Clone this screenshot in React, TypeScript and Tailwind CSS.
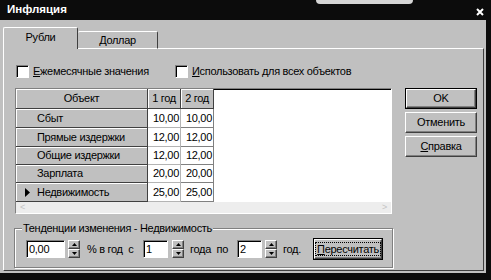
import { FC, ReactNode } from 'react'

const raised =
  'border border-t-white border-l-white border-r-[#404040] border-b-[#404040] shadow-[inset_-1px_-1px_0_#808080]'
const sunken =
  'border border-t-[#808080] border-l-[#808080] border-r-white border-b-white shadow-[inset_1px_1px_0_#000]'

type Row = { name: string; a: string; b: string; h: string; current?: boolean }

const rows: Row[] = [
  { name: 'Сбыт', a: '10,00', b: '10,00', h: 'h-[19px]' },
  { name: 'Прямые издержки', a: '12,00', b: '12,00', h: 'h-[19px]' },
  { name: 'Общие издержки', a: '12,00', b: '12,00', h: 'h-[18px]' },
  { name: 'Зарплата', a: '20,00', b: '20,00', h: 'h-[18px]' },
  { name: 'Недвижимость', a: '25,00', b: '25,00', h: 'h-[19px]', current: true },
]

const Check: FC<{ children: ReactNode }> = ({ children }) => (
  <label className="flex items-center gap-[4px]">
    <span className={`h-[13px] w-[13px] bg-white ${sunken}`} />
    <span>{children}</span>
  </label>
)

const Spin: FC<{ className?: string }> = ({ className = '' }) => (
  <div className={`flex h-[18px] w-[12px] flex-col ${className}`}>
    <div className={`flex h-[9px] items-center justify-center bg-[#c0c0c0] ${raised}`}>
      <svg width="5" height="3" viewBox="0 0 5 3">
        <path d="M2.5 0L5 3H0z" fill="#000" />
      </svg>
    </div>
    <div className={`flex h-[9px] items-center justify-center bg-[#c0c0c0] ${raised}`}>
      <svg width="5" height="3" viewBox="0 0 5 3">
        <path d="M0 0H5L2.5 3z" fill="#000" />
      </svg>
    </div>
  </div>
)

const Field: FC<{ value: string; w: string }> = ({ value, w }) => (
  <div className={`flex h-[18px] items-center bg-white pl-[2px] ${w} ${sunken}`}>{value}</div>
)

const Button: FC<{ children: ReactNode; primary?: boolean }> = ({ children, primary }) =>
  primary ? (
    <div className="h-[21px] w-[72px] border border-black">
      <div className={`flex h-full items-center justify-center bg-[#c0c0c0] ${raised}`}>{children}</div>
    </div>
  ) : (
    <div className={`flex h-[21px] w-[72px] items-center justify-center bg-[#c0c0c0] ${raised}`}>
      {children}
    </div>
  )

export default function App() {
  return (
    <div className="relative h-[280px] w-[491px] overflow-hidden bg-[#0c0c0c] font-['Liberation_Sans',Arial,sans-serif] text-[11px] tracking-[-0.3px] text-black">
      <div className="absolute left-[316px] top-0 h-[4px] w-[97px] rounded-b-[6px] bg-[#d6d6d6]" />

      <div className="flex h-[20px] items-center justify-between pl-[7px] pr-[7px] text-white">
        <span className="text-[11.5px] font-bold tracking-normal">Инфляция</span>
        <svg width="8" height="8" viewBox="0 0 8 8" className="mt-[3px]">
          <path d="M1 1L7 7M7 1L1 7" stroke="#fff" strokeWidth="2" />
        </svg>
      </div>

      <div className="flex h-[253px] w-[486px] flex-col bg-[#c0c0c0] pl-[3px] pr-[2px] pt-[7px] pb-[2px]">
        <div className="relative z-10 -mb-px flex items-end">
          <div className="flex h-[22px] w-[75px] items-center justify-center rounded-t-[2px] border-l border-t border-r border-l-white border-t-white border-r-[#404040] bg-[#c0c0c0] pb-[2px]">
            Рубли
          </div>
          <div className="flex h-[18px] w-[80px] items-center justify-center rounded-t-[2px] border-t border-r border-b border-t-white border-r-[#404040] border-b-white bg-[#c0c0c0]">
            Доллар
          </div>
        </div>

        <div className="flex flex-1 border border-t-white border-l-white border-r-[#404040] border-b-[#404040] pl-[11px] pt-[16px]">
          <div className="flex w-[378px] flex-col">
            <div className="flex h-[13px] items-center pl-[1px]">
              <div className="w-[159px]">
                <Check>
                  <span className="underline">Е</span>жемесячные значения
                </Check>
              </div>
              <Check>
                <span className="underline">И</span>спользовать для всех объектов
              </Check>
            </div>

            <div className={`mt-[10px] flex h-[126px] w-[377px] flex-col bg-white ${sunken}`}>
              <div className="flex h-[20px]">
                <div className="flex w-[132px] items-center justify-center border-r border-b border-[#404040] bg-[#c0c0c0] shadow-[inset_1px_1px_0_#fff]">
                  Объект
                </div>
                <div className="flex w-[33px] items-center justify-center border-r border-b border-[#404040] bg-[#c0c0c0] shadow-[inset_1px_1px_0_#fff]">
                  1 год
                </div>
                <div className="flex w-[33px] items-center justify-center border-r border-b border-[#404040] bg-[#c0c0c0] shadow-[inset_1px_1px_0_#fff]">
                  2 год
                </div>
              </div>
              {rows.map((r) => (
                <div key={r.name} className={`flex ${r.h}`}>
                  <div className="flex w-[132px] items-center border-r border-b border-[#404040] bg-[#c0c0c0] shadow-[inset_1px_1px_0_#fff]">
                    <span className="flex w-[21px] justify-center pl-[2px]">
                      {r.current && (
                        <svg width="5" height="9" viewBox="0 0 5 9">
                          <path d="M0 0L5 4.5L0 9z" fill="#000" />
                        </svg>
                      )}
                    </span>
                    {r.name}
                  </div>
                  <div className="flex w-[33px] items-center justify-end border-r border-b border-[#b4b4b4] pr-[1px]">
                    {r.a}
                  </div>
                  <div className="flex w-[33px] items-center justify-end border-r border-b border-[#808080] pr-[1px]">
                    {r.b}
                  </div>
                </div>
              ))}
              <div className="flex-1" />
              <div className="flex h-[11px] items-center justify-between bg-[#ededed] px-[4px] text-[9px] text-[#c4c4c4]">
                <span>&lt;</span>
                <span>&gt;</span>
              </div>
            </div>

            <fieldset className="mt-[8px] -ml-px h-[46px] w-[379px] border border-[#808080] px-[7px] shadow-[1px_1px_0_#fff,inset_1px_1px_0_#fff]">
              <legend className="bg-[#c0c0c0] px-[1px] leading-[13px]">Тенденции изменения - Недвижимость</legend>
              <div className="mt-[3px] flex h-[22px] items-center pl-[4px]">
                <Field value="0,00" w="w-[39px]" />
                <Spin className="ml-[3px]" />
                <span className="ml-[7px] w-[56px] whitespace-pre">% в год  с</span>
                <Field value="1" w="w-[25px]" />
                <Spin className="ml-[4px]" />
                <span className="ml-[6px] w-[47px] whitespace-pre">года  по</span>
                <Field value="2" w="w-[25px]" />
                <Spin className="ml-[3px]" />
                <span className="ml-[6px] w-[30px]">год.</span>
                <div className="h-[22px] w-[70px] border border-black">
                  <div className={`flex h-full items-center justify-center bg-[#c0c0c0] ${raised}`}>
                    <span className="border border-dotted border-black px-[1px] leading-[12px]">
                      <span className="underline">П</span>ересчитать
                    </span>
                  </div>
                </div>
              </div>
            </fieldset>
          </div>

          <div className="ml-[12px] mt-[23px] flex flex-col gap-[3px]">
            <Button primary>OK</Button>
            <Button>Отменить</Button>
            <Button>
              <span>
                <span className="underline">С</span>правка
              </span>
            </Button>
          </div>
        </div>
      </div>
    </div>
  )
}
